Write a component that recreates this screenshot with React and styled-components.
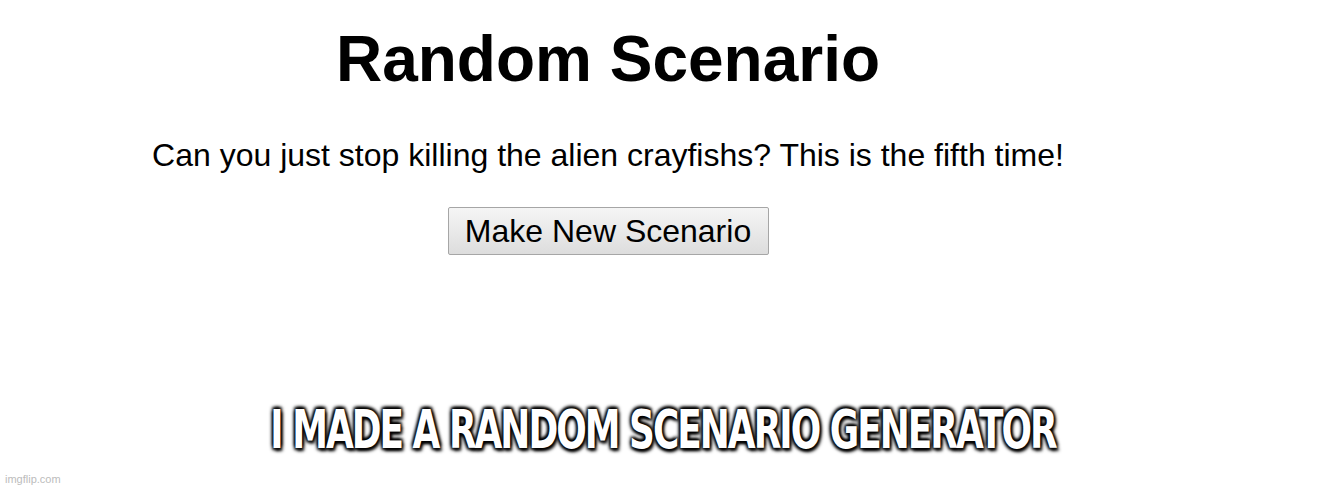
import React from 'react';
import styled, { createGlobalStyle } from 'styled-components';

const GlobalStyle = createGlobalStyle`
  html, body {
    margin: 0;
    padding: 0;
    background: #ffffff;
  }
  body {
    font-family: "Liberation Sans", Arial, sans-serif;
  }
`;

const Page = styled.div`
  position: relative;
  width: 1326px;
  height: 489px;
  overflow: hidden;
  background: #ffffff;
`;

const Generator = styled.main`
  width: 1216px;
  display: flex;
  flex-direction: column;
  align-items: center;
  padding-top: 20px;
`;

const Title = styled.h1`
  margin: 0;
  font-size: 64px;
  line-height: 78px;
  font-weight: 700;
  color: #000;
`;

const Scenario = styled.p`
  margin: 39px 0 0;
  font-size: 32px;
  line-height: 37px;
  color: #000;
`;

const MakeButton = styled.button`
  margin-top: 33px;
  width: 321px;
  height: 48px;
  font-family: "Liberation Sans", Arial, sans-serif;
  font-size: 32px;
  line-height: 1;
  color: #000;
  background: linear-gradient(#f5f5f5, #dddddd);
  border: 1px solid #a6a6a6;
  border-radius: 2px;
  padding: 0;
`;

/* meme caption: condensed white letters with a dark halo */
const Caption = styled.div`
  position: absolute;
  left: 0;
  right: 0;
  top: 398px;
  text-align: center;
  font-family: "DejaVu Sans", sans-serif;
  font-weight: 700;
  font-size: 54px;
  color: #fff;
  letter-spacing: -3px;
  transform: scaleX(0.665);
  -webkit-text-stroke: 2px #fff;
  paint-order: stroke fill;
  text-shadow: 3px 3px 4px #000, -2px -2px 4px #000, 2px -2px 4px #000, -2px 2px 4px #000;
`;

const Watermark = styled.span`
  position: absolute;
  left: 5px;
  bottom: 4px;
  font-size: 11px;
  color: #bcbcbc;
`;

export default function App() {
  return (
    <Page>
      <GlobalStyle />
      <Generator>
        <Title>Random Scenario</Title>
        <Scenario>Can you just stop killing the alien crayfishs? This is the fifth time!</Scenario>
        <MakeButton>Make New Scenario</MakeButton>
      </Generator>
      <Caption>I MADE A RANDOM SCENARIO GENERATOR</Caption>
      <Watermark>imgflip.com</Watermark>
    </Page>
  );
}
